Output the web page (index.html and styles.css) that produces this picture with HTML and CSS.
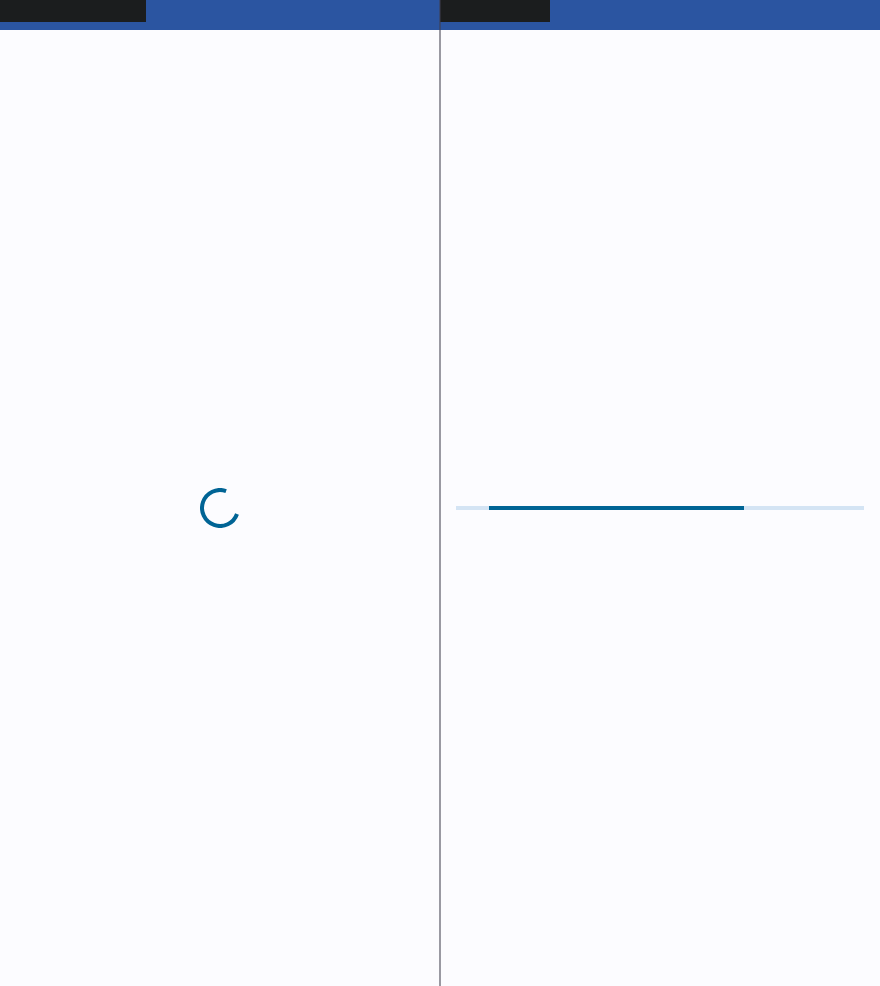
FILE: index.html
```html
<!DOCTYPE html>
<html lang="en">
<head>
<meta charset="utf-8">
<meta name="viewport" content="width=device-width, initial-scale=1">
<title>Progress indicators</title>
<link rel="stylesheet" href="styles.css">
</head>
<body>
<main class="screens">
  <section class="screen">
    <header class="bar"><div class="label label-wide"></div></header>
    <div class="content">
      <svg class="spinner" viewBox="0 0 40 40" role="progressbar" aria-label="Loading">
        <path d="M26.1 3.05A18 18 0 1 0 37 26"/>
      </svg>
    </div>
  </section>
  <section class="screen">
    <header class="bar"><div class="label"></div></header>
    <div class="content">
      <div class="track" role="progressbar" aria-label="Loading">
        <div class="segment" style="margin-left: 8%; width: 62.5%"></div>
      </div>
    </div>
  </section>
  <div class="divider"></div>
</main>
</body>
</html>
```
FILE: styles.css
```css
* {
  box-sizing: border-box;
}

body {
  margin: 0;
  background: #fcfcff;
}

.screens {
  position: relative;
  display: grid;
  grid-template-columns: 1fr 1fr;
  min-height: 100vh;
}

.screen {
  display: flex;
  flex-direction: column;
}

.bar {
  height: 30px;
  background: #2b55a1;
}

.label {
  width: 25%;
  height: 22px;
  background: #1b1d1e;
}

.label-wide {
  width: 146px;
}

.content {
  flex: 1;
  display: flex;
  align-items: center;
  justify-content: center;
  padding: 0 16px;
}

.spinner {
  width: 40px;
  height: 40px;
  fill: none;
  stroke: #006495;
  stroke-width: 4;
}

.track {
  width: 100%;
  height: 4px;
  background: #d4e4f4;
}

.segment {
  height: 4px;
  background: #006495;
}

/* Translucent line laid over the seam between the two screens */
.divider {
  position: absolute;
  top: 0;
  bottom: 0;
  left: 50%;
  width: 2px;
  margin-left: -1px;
  background: rgba(63, 62, 76, 0.52);
}
```
